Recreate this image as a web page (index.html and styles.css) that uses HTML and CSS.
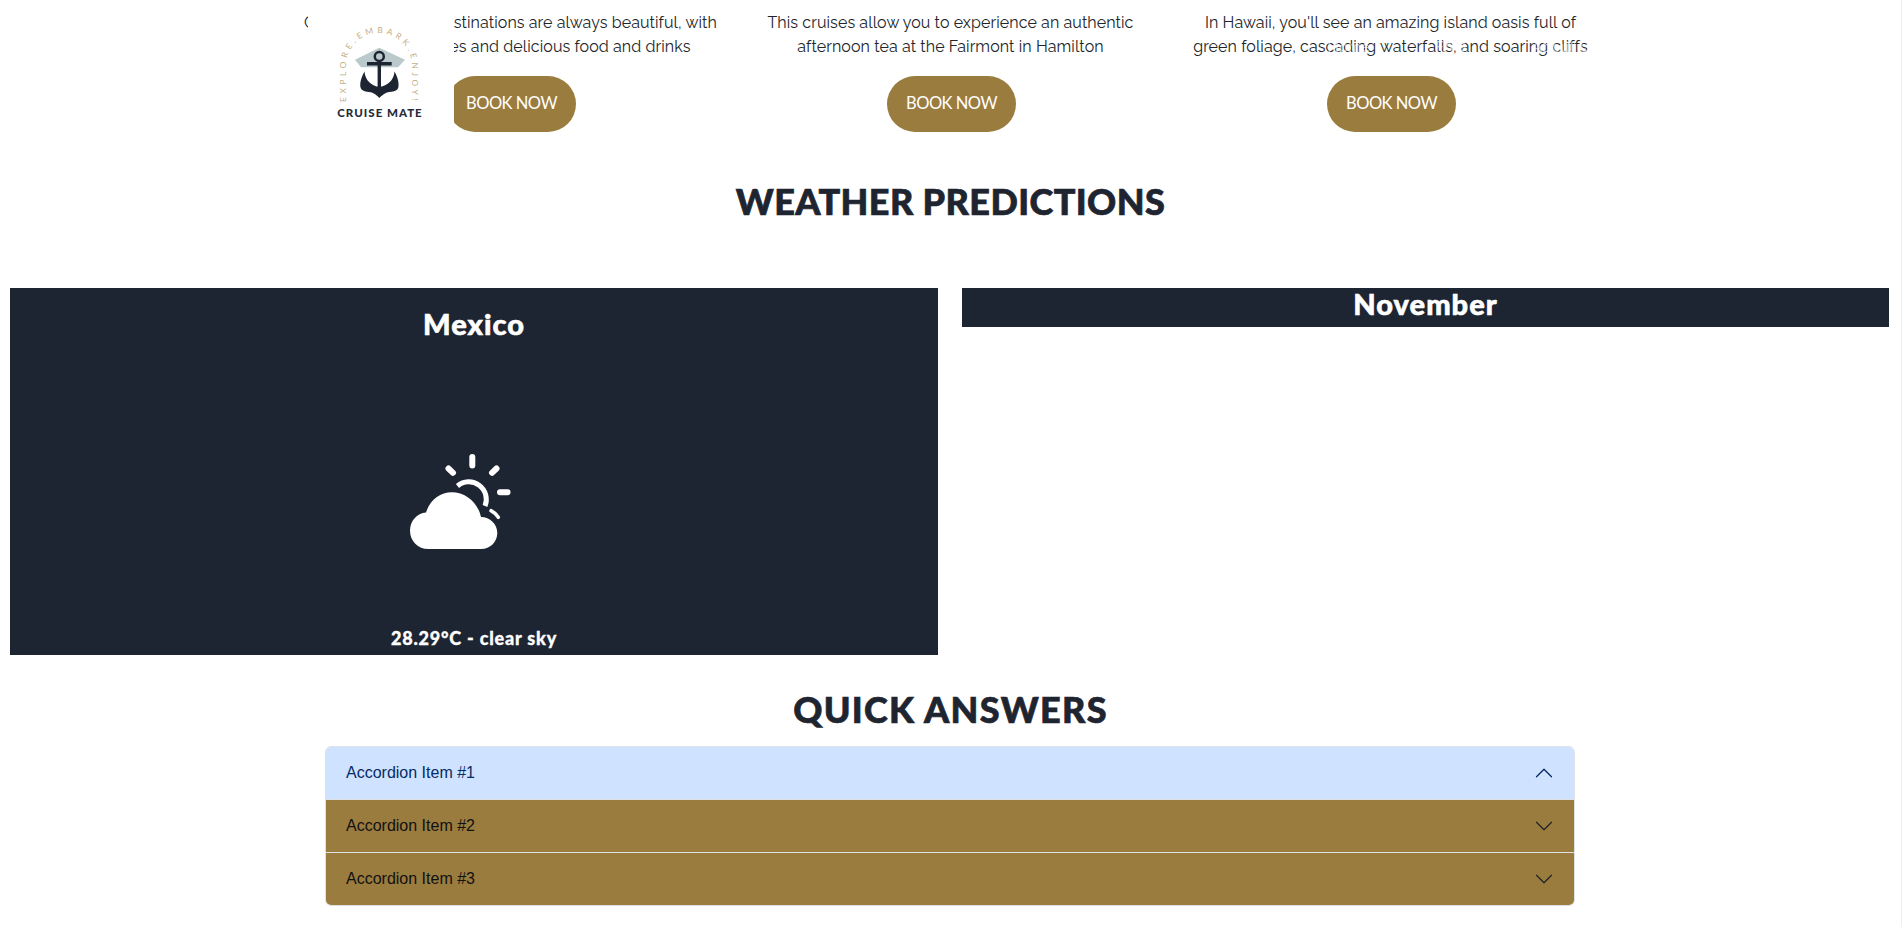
FILE: index.html
```html
<!DOCTYPE html>
<html lang="en">
<head>
<meta charset="utf-8">
<title>Cruise Mate</title>
<link rel="stylesheet" href="styles.css">
</head>
<body>
<header class="brand">
  <svg class="logo" width="120" height="115" viewBox="0 0 120 115" aria-label="Cruise Mate logo">
    <defs><path id="logo-arc" d="M26 92 L26 56 A33 33 0 0 1 92 56 L92 92"/></defs>
    <text class="logo-arc-text"><textPath href="#logo-arc" textLength="174">EXPLORE.EMBARK.ENJOY!</textPath></text>
    <g transform="translate(1 0.5)">
      <polygon class="logo-hat" points="34,49.3 58.3,37.3 84,49.3 77,56.7 40,56.7"/>
      <circle class="logo-ring" cx="58.3" cy="46" r="4.5"/>
      <path class="logo-bar" d="M46 53.3H70.7M58.3 50V84"/>
      <path class="logo-fluke" d="M43.5 61C41 66 39 70 39.3 76C40 80 43 81 48 81.5C53 82 56 85 58.3 87.5C61 85 64 82 68.5 81.5C74 81 77 80 77.5 76C78 70 76 66 73.5 61C73 67 70 73 61 76L55.5 76C47 73 44 67 43.5 61Z"/>
    </g>
    <text class="logo-name" x="60" y="107" text-anchor="middle">CRUISE MATE</text>
  </svg>
</header>
<nav class="ghost-nav" aria-hidden="true"><span>Home</span><span>FAQ</span><span>About Us</span></nav>

<main class="page">
  <section class="cruises">
    <article class="cruise">
      <p>Caribbean cruise destinations are always beautiful, with<br>sparkling beaches and delicious food and drinks</p>
      <a class="book" href="#">BOOK NOW</a>
    </article>
    <article class="cruise">
      <p>This cruises allow you to experience an authentic<br>afternoon tea at the Fairmont in Hamilton</p>
      <a class="book" href="#">BOOK NOW</a>
    </article>
    <article class="cruise">
      <p>In Hawaii, you'll see an amazing island oasis full of<br>green foliage, cascading waterfalls, and soaring cliffs</p>
      <a class="book" href="#">BOOK NOW</a>
    </article>
  </section>

  <h2 class="section-title weather-title">WEATHER PREDICTIONS</h2>

  <section class="weather">
    <div class="panel current">
      <h3 class="panel-title">Mexico</h3>
      <svg class="weather-icon" width="128" height="110" viewBox="0 0 128 110" aria-label="Partly cloudy">
        <path class="cloud" d="M18.3 100C8 100 0 92 0 81.7C0 72 7 64 16 63.5C20 51 30 43.3 41.7 43.3C56 43.3 68 54 71 68C80 68 87.3 75 87.3 84C87.3 93 80 100 71.3 100Z"/>
        <path class="sun" d="M47.5 37A17.5 17.5 0 0 1 75 57"/>
        <path class="ray" d="M62.3 8V16.5M38.5 19.5L43 23.8M86.5 19.5L82 23.8M90 43.3H97.5"/>
        <path class="ray-small" d="M81 61.7Q85.5 64 88.3 68.3"/>
      </svg>
      <p class="temp">28.29°C - clear sky</p>
    </div>
    <div class="panel month">
      <h3 class="panel-title">November</h3>
    </div>
  </section>

  <h2 class="section-title answers-title">QUICK ANSWERS</h2>

  <section class="accordion">
    <div class="acc-row open">
      <span>Accordion Item #1</span>
      <svg class="chev flip" width="20" height="20" viewBox="0 0 16 16"><path d="M1.646 4.646a.5.5 0 0 1 .708 0L8 10.293l5.646-5.647a.5.5 0 0 1 .708.708l-6 6a.5.5 0 0 1-.708 0l-6-6a.5.5 0 0 1 0-.708z"/></svg>
    </div>
    <div class="acc-row">
      <span>Accordion Item #2</span>
      <svg class="chev" width="20" height="20" viewBox="0 0 16 16"><path d="M1.646 4.646a.5.5 0 0 1 .708 0L8 10.293l5.646-5.647a.5.5 0 0 1 .708.708l-6 6a.5.5 0 0 1-.708 0l-6-6a.5.5 0 0 1 0-.708z"/></svg>
    </div>
    <div class="acc-row">
      <span>Accordion Item #3</span>
      <svg class="chev" width="20" height="20" viewBox="0 0 16 16"><path d="M1.646 4.646a.5.5 0 0 1 .708 0L8 10.293l5.646-5.647a.5.5 0 0 1 .708.708l-6 6a.5.5 0 0 1-.708 0l-6-6a.5.5 0 0 1 0-.708z"/></svg>
    </div>
  </section>
</main>
</body>
</html>
```
FILE: styles.css
```css
* { box-sizing: border-box; }
html, body { margin: 0; height: 100%; overflow: hidden; background: #fff; }
body { font-family: "Liberation Sans", Arial, sans-serif; color: #212529; border-right: 1px solid #eee; position: relative; }

.brand {
  position: absolute;
  left: 308px;
  top: 0;
  width: 146px;
  height: 136px;
  background: #fff;
  padding: 10px 0 0 12px;
  z-index: 2;
}
.logo { display: block; }
.logo-arc-text { font-family: "Lato", sans-serif; font-size: 8.4px; fill: #c4ae86; }
.logo-hat { fill: #b9c9cc; }
.logo-ring { fill: none; stroke: #1e2532; stroke-width: 2.5; }
.logo-bar { fill: none; stroke: #1e2532; stroke-width: 3.4; }
.logo-fluke { fill: #1e2532; }
.logo-name { font-family: "Lato", sans-serif; font-weight: 900; font-size: 11.5px; letter-spacing: 1px; fill: #262c38; }

.ghost-nav {
  position: absolute;
  left: 1327px;
  top: 36px;
  display: flex;
  gap: 65px;
  font: 500 16px "Lato", sans-serif;
  color: rgba(255, 255, 255, .6);
  z-index: 3;
}

.cruises { width: 1320px; margin: 0 auto; display: grid; grid-template-columns: repeat(3, 440px); padding-top: 11px; }
.cruise { display: flex; flex-direction: column; align-items: center; text-align: center; }
.cruise p { margin: 0 0 17px; font: 400 16px/24px "Raleway", "Lato", sans-serif; letter-spacing: .09px; color: #212529; white-space: nowrap; }
.book {
  display: flex; align-items: center; justify-content: center;
  width: 129px; height: 56px; border-radius: 28px; margin-left: 2px; padding-bottom: 3px;
  background: #9b7c3f; color: #fff; text-decoration: none;
  font: 400 16.5px "Lato", sans-serif; letter-spacing: -.5px;
}

.section-title { margin: 0; text-align: center; font: 900 36px/1 "Lato", sans-serif; color: #1f2530; -webkit-text-stroke: .7px #1f2530; }
.weather-title { padding: 51px 0 0; height: 156px; letter-spacing: .4px; }
.weather { display: grid; grid-template-columns: 928px 927px; gap: 24px; padding-left: 10px; align-items: start; }
.panel { background: #1e2532; color: #fff; text-align: center; }
.current { height: 367px; display: flex; flex-direction: column; align-items: center; }
.month { height: 39px; }
.panel-title { margin: 0; font: 900 29px/1 "Lato", sans-serif; letter-spacing: 1px; -webkit-text-stroke: .6px #fff; }
.current .panel-title { padding-top: 21px; }
.month .panel-title { padding-top: 1px; }
.weather-icon { display: block; margin-top: 111px; }
.cloud { fill: #fff; }
.sun { fill: none; stroke: #fff; stroke-width: 5; }
.ray { fill: none; stroke: #fff; stroke-width: 6; stroke-linecap: round; }
.ray-small { fill: none; stroke: #fff; stroke-width: 3.6; stroke-linecap: round; }
.temp { margin: auto 0 5px; font: 900 18px/1.2 "Lato", sans-serif; letter-spacing: .8px; -webkit-text-stroke: .3px #fff; }

.answers-title { padding-top: 36px; height: 91px; letter-spacing: 1.3px; }
.accordion { width: 1250px; margin: 0 0 0 325px; border: 1px solid #dee2e6; border-radius: 6px; overflow: hidden; }
.acc-row { height: 53px; display: flex; align-items: center; justify-content: space-between; padding: 0 20px; background: #9b7c3f; color: #111; font-size: 16px; border-top: 1px solid #dee2e6; }
.acc-row:first-child { border-top: 0; height: 52px; }
.acc-row.open { background: #cfe2ff; color: #052c65; }
.acc-row.open .chev { fill: #052c65; }
.chev { fill: #212529; }
.flip { transform: rotate(180deg); }
```
